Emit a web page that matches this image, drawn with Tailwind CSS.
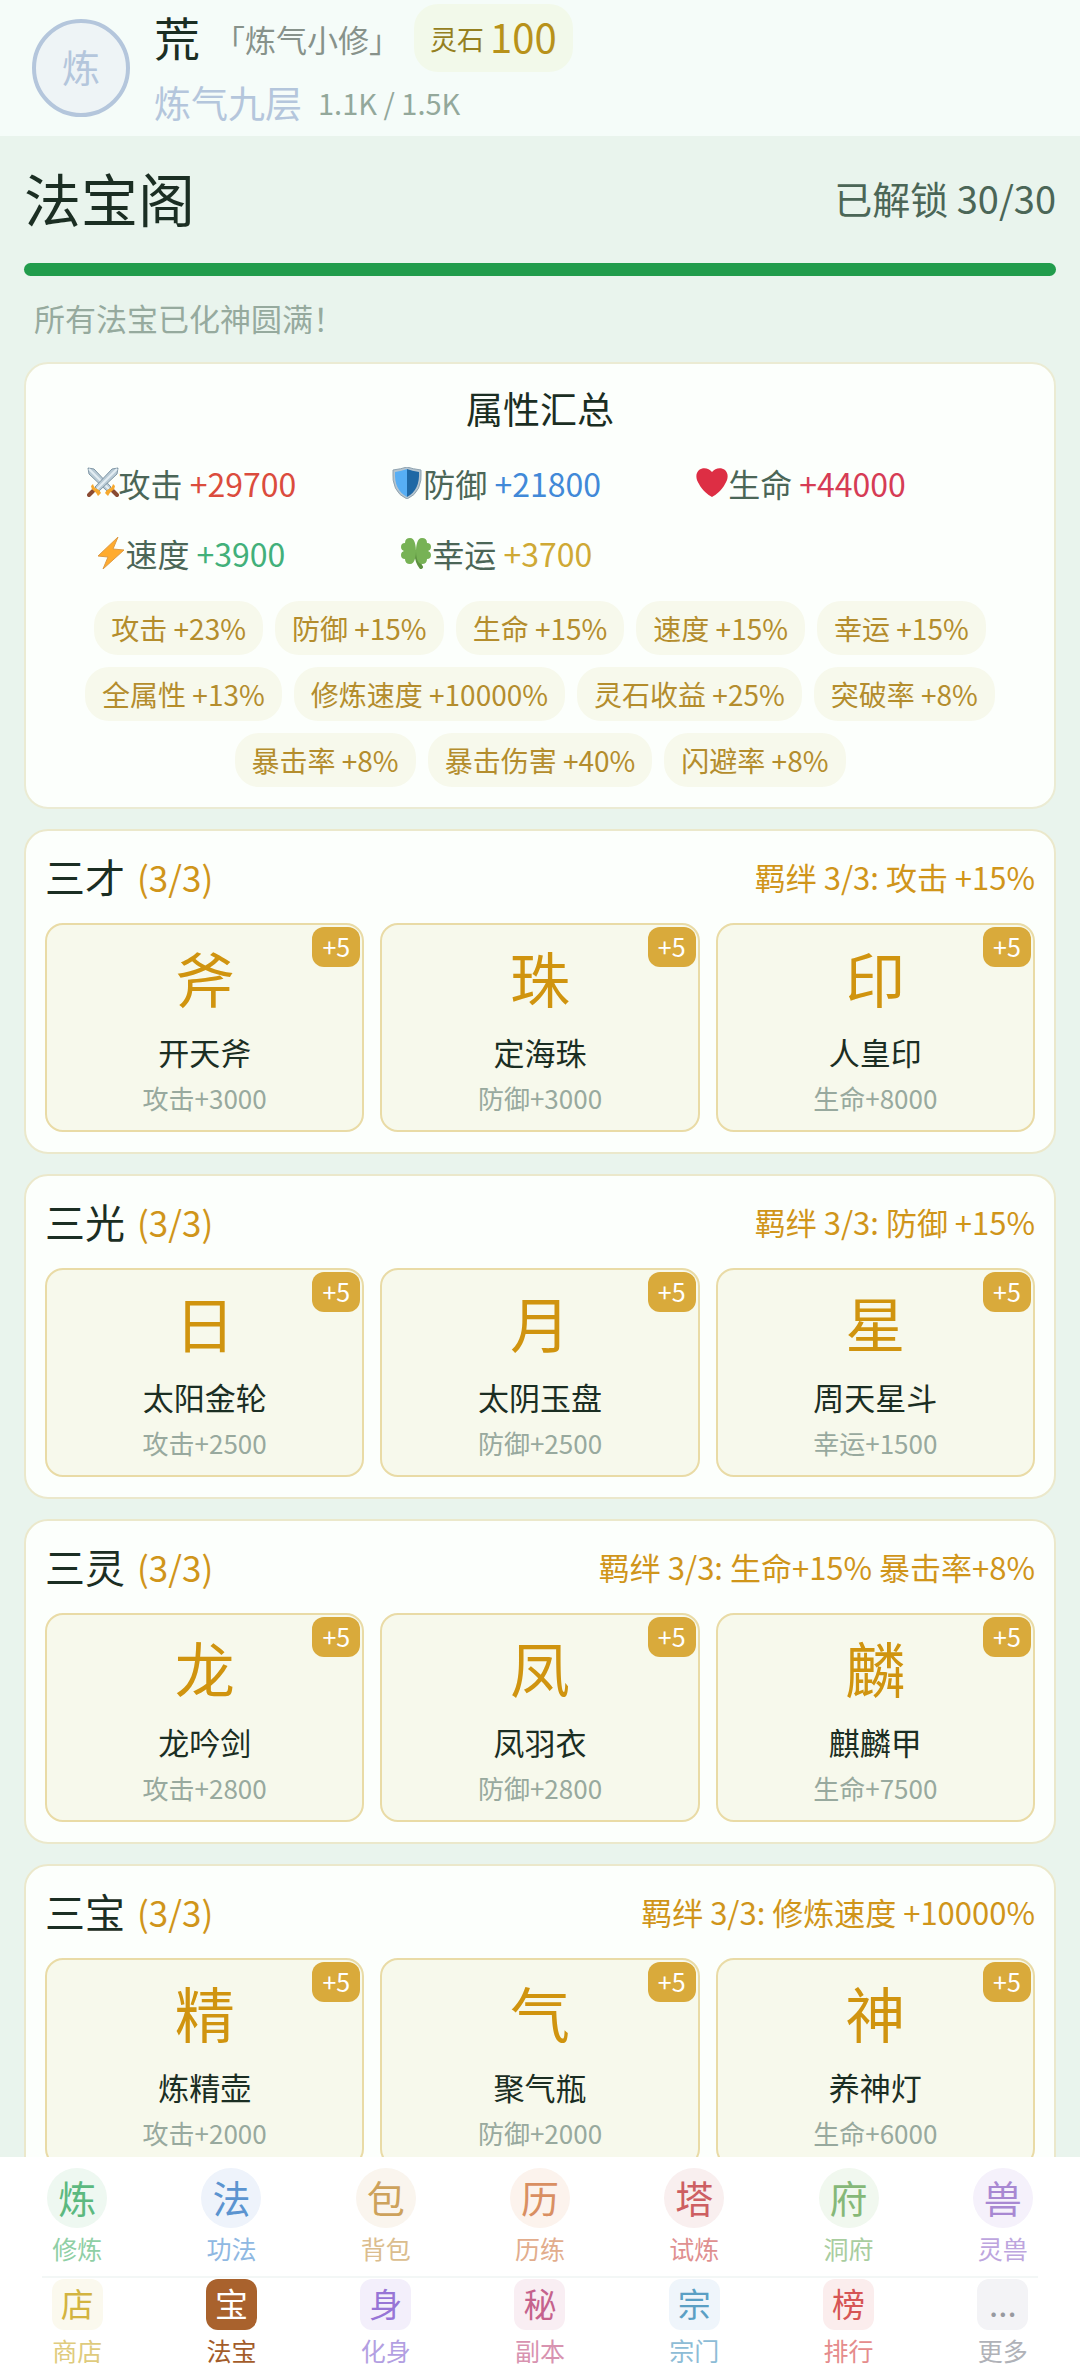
<!DOCTYPE html>
<html lang="zh-CN">
<head>
    <meta charset="UTF-8" />
    <meta name="viewport" content="width=device-width, initial-scale=1.0" />
    <title>法宝阁</title>
    <script src="https://cdn.jsdelivr.net/npm/@tailwindcss/browser@4"></script>
</head>
<body class="font-['Noto_Sans_CJK_SC',sans-serif] text-[#1b2e23]">
<div class="flex flex-col h-screen bg-[#e9f4ed]">
    <header class="flex items-center gap-6 px-8 h-[136px] shrink-0 bg-[#f5fcf9]">
        <div class="flex items-center justify-center size-[98px] pb-1 rounded-full border-4 border-[#b4c6dc] bg-[#eef4f6] text-[#b4c6dc] text-[38px] leading-none">炼</div>
        <div class="flex flex-col">
            <div class="flex items-center gap-3.5 h-[68px]">
                <span class="text-[46px] leading-none pb-1">荒</span>
                <span class="text-[31px] leading-none text-[#87928b]">「炼气小修」</span>
                <div class="flex items-center gap-1.5 h-full px-4 rounded-3xl bg-[#f2f9ea]">
                    <span class="text-[27px] leading-none text-[#95801f]">灵石</span>
                    <span class="text-[40px] leading-none text-[#b8921a] pb-1" id="stones">100</span>
                </div>
            </div>
            <div class="flex items-center gap-4 h-[60px]">
                <span class="text-[37px] leading-none text-[#b4c6dc]">炼气九层</span>
                <span class="text-[29px] leading-none text-[#93a89b]">1.1K / 1.5K</span>
            </div>
        </div>
    </header>

    <main class="flex-1 min-h-0 overflow-y-auto [scrollbar-width:none] px-6">
        <div class="flex items-center justify-between h-[127px] pb-1">
            <h1 class="text-[57px] leading-none">法宝阁</h1>
            <span class="text-[38px] leading-none text-[#4b6657]">已解锁 30/30</span>
        </div>
        <div class="h-[13px] rounded-full bg-[#d3e8da]" role="progressbar" aria-label="已解锁" aria-valuenow="30" aria-valuemax="30">
            <div class="h-full rounded-full bg-[#219c4c]" style="width: 100%"></div>
        </div>
        <p class="px-2.5 h-[86px] leading-[84px] text-[31px] text-[#96aa9e]">所有法宝已化神圆满！</p>

        <section class="rounded-3xl border-2 border-[#ebebd3] bg-[#fcfffc] px-4 pt-4 pb-5">
            <h2 class="text-center text-[37px] leading-[56px]">属性汇总</h2>
            <div class="grid grid-cols-[30%_30%_30%] gap-x-1.5 gap-y-4 mt-5 text-[32px] leading-[54px]">
                <div class="flex items-center justify-center">
                    <svg class="size-8" viewBox="0 0 32 32">
                        <g id="sword">
                            <path d="M1 1l6 1 17 18-4 4L2 7z" fill="#b9cbd6" stroke="#7f96a5" stroke-width="1" />
                            <path d="M2 2l20 20" stroke="#e4eef3" stroke-width="2" />
                            <path d="M26 24l4 4" stroke="#8a4b32" stroke-width="4" stroke-linecap="round" />
                            <path d="M18 26q1-3 4-4 3-1 4-5l2 2q0 3-3 5-3 2-4 5z" fill="#f6a82d" />
                        </g>
                        <use href="#sword" transform="matrix(-1 0 0 1 32 0)" />
                    </svg>
                    <span class="text-[#4b6657]">攻击&nbsp;</span><span class="text-[#db4c3d]">+29700</span>
                </div>
                <div class="flex items-center justify-center">
                    <svg class="size-8" viewBox="0 0 32 32">
                        <path d="M16 0q6 2 14 3 2 22-14 29Q0 25 2 3q8-1 14-3z" fill="#b5c5d0" stroke="#8fa3b0" stroke-width="1" />
                        <path d="M16 2q-5 2-12 3-1 18 12 25z" fill="#57aef4" />
                        <path d="M16 2q5 2 12 3 1 18-12 25z" fill="#1f68a5" />
                    </svg>
                    <span class="text-[#4b6657]">防御&nbsp;</span><span class="text-[#4189d8]">+21800</span>
                </div>
                <div class="flex items-center justify-center">
                    <svg class="size-8" viewBox="0 0 32 32">
                        <path d="M16 5C19 1 25 0 29 3c4 4 3 9 0 14-3 6-9 11-13 13C12 28 6 23 3 17 0 12-1 7 3 3 7 0 13 1 16 5z" fill="#dd2e44" />
                    </svg>
                    <span class="text-[#4b6657]">生命&nbsp;</span><span class="text-[#d63c55]">+44000</span>
                </div>
                <div class="flex items-center justify-center">
                    <svg class="w-7 h-8" viewBox="0 0 28 32">
                        <path d="M21 0L1 19l10 1-5 12 21-19-11-1z" fill="#ffab2e" stroke="#dc9a45" stroke-width="1" stroke-linejoin="round" />
                    </svg>
                    <span class="text-[#4b6657]">速度&nbsp;</span><span class="text-[#42b07a]">+3900</span>
                </div>
                <div class="flex items-center justify-center">
                    <svg class="size-8" viewBox="0 0 32 32">
                        <path d="M16 15q1 10 5 15" fill="none" stroke="#5d9140" stroke-width="4" stroke-linecap="round" />
                        <g fill="#77b255">
                            <path id="leaf" d="M16 15C11 15 1 16 1 10q0-4 4-4 0-5 5-5c5 0 6 8 6 14z" />
                            <use href="#leaf" transform="matrix(-1 0 0 1 32 0)" />
                            <use href="#leaf" transform="matrix(1 0 0 -1 0 28)" />
                            <use href="#leaf" transform="matrix(-1 0 0 -1 32 28)" />
                        </g>
                    </svg>
                    <span class="text-[#4b6657]">幸运&nbsp;</span><span class="text-[#cfa935]">+3700</span>
                </div>
            </div>
            <ul class="flex flex-wrap justify-center gap-3 mt-[21px] px-4" id="tags"></ul>
        </section>

        <div id="groups"></div>
    </main>

    <nav class="shrink-0 h-[219px] bg-white pt-[11px]">
        <div class="grid grid-cols-7 h-[108px]" id="nav1"></div>
        <div class="mx-[42px] border-t-2 border-[#f3f7f6]"></div>
        <div class="grid grid-cols-7 pt-px" id="nav2"></div>
    </nav>
</div>

<script>
    const tags = [
        "攻击 +23%", "防御 +15%", "生命 +15%", "速度 +15%", "幸运 +15%",
        "全属性 +13%", "修炼速度 +10000%", "灵石收益 +25%", "突破率 +8%",
        "暴击率 +8%", "暴击伤害 +40%", "闪避率 +8%",
    ];

    const groups = [
        { name: "三才", bond: "攻击 +15%", items: [["斧", "开天斧", "攻击+3000"], ["珠", "定海珠", "防御+3000"], ["印", "人皇印", "生命+8000"]] },
        { name: "三光", bond: "防御 +15%", items: [["日", "太阳金轮", "攻击+2500"], ["月", "太阴玉盘", "防御+2500"], ["星", "周天星斗", "幸运+1500"]] },
        { name: "三灵", bond: "生命+15% 暴击率+8%", items: [["龙", "龙吟剑", "攻击+2800"], ["凤", "凤羽衣", "防御+2800"], ["麟", "麒麟甲", "生命+7500"]] },
        { name: "三宝", bond: "修炼速度 +10000%", items: [["精", "炼精壶", "攻击+2000"], ["气", "聚气瓶", "防御+2000"], ["神", "养神灯", "生命+6000"]] },
    ];

    // icon, label, icon classes, label class
    const nav1 = [
        ["炼", "修炼", "bg-[#eef8f1] text-[#5cb97f]", "text-[#8fcfa5]"],
        ["法", "功法", "bg-[#eef3fb] text-[#5b94d0]", "text-[#8fb8e2]"],
        ["包", "背包", "bg-[#faf5ee] text-[#cda25c]", "text-[#dbbd8e]"],
        ["历", "历练", "bg-[#fcf3ed] text-[#d98f62]", "text-[#e2ad8d]"],
        ["塔", "试炼", "bg-[#f9efef] text-[#cd5f62]", "text-[#df9090]"],
        ["府", "洞府", "bg-[#f1f8ef] text-[#86b878]", "text-[#a9cd9f]"],
        ["兽", "灵兽", "bg-[#f5f1fb] text-[#a888d2]", "text-[#bda5de]"],
    ];
    const nav2 = [
        ["店", "商店", "bg-[#fbf9ee] text-[#d3b440]", "text-[#dfcb7d]"],
        ["宝", "法宝", "bg-[#a9622d] text-white", "text-[#a35c2a]"],
        ["身", "化身", "bg-[#f3effb] text-[#9775d6]", "text-[#b39fe2]"],
        ["秘", "副本", "bg-[#f9eef3] text-[#c5628c]", "text-[#d893b0]"],
        ["宗", "宗门", "bg-[#eff5fb] text-[#5b9fc4]", "text-[#8dbcd6]"],
        ["榜", "排行", "bg-[#fbeded] text-[#d65555]", "text-[#e58c8c]"],
        ["...", "更多", "bg-[#f3f3f6] text-[#97999f]", "text-[#b0b2b8]"],
    ];

    document.getElementById("tags").innerHTML = tags.map((t) =>
        `<li class="px-[17px] h-[54px] leading-[54px] rounded-3xl bg-[#f7f9ec] text-[#b48d2d] text-[28px]">${t}</li>`
    ).join("");

    document.getElementById("groups").innerHTML = groups.map((g) => `
        <section class="mt-5 rounded-3xl border-2 border-[#ebe8cb] bg-[#fcfffc] px-[19px] pb-5">
            <div class="flex items-center justify-between h-[92px] pb-0.5">
                <h3 class="flex items-center gap-3 text-[40px] leading-none">${g.name}<span class="text-[35px] text-[#d0951a]">(3/3)</span></h3>
                <span class="text-[31px] leading-none text-[#d0951a]">羁绊 3/3: ${g.bond}</span>
            </div>
            <div class="grid grid-cols-3 gap-4">
                ${g.items.map(([icon, name, stat]) => `
                <button class="relative flex flex-col items-center h-[209px] pt-5 rounded-[18px] border-2 border-[#e9dba6] bg-[#f7f9ec]">
                    <span class="absolute top-0.5 right-0.5 w-12 h-10 leading-[38px] rounded-xl bg-[#d9aa3b] text-white text-[25px]">+5</span>
                    <span class="text-[60px] leading-[64px] text-[#d0940f]">${icon}</span>
                    <span class="mt-5 text-[31px] leading-[46px]">${name}</span>
                    <span class="text-[26px] leading-[46px] text-[#98a99e]">${stat}</span>
                </button>`).join("")}
            </div>
        </section>`).join("");

    document.getElementById("nav1").innerHTML = nav1.map(([icon, label, box, text]) => `
        <button class="flex flex-col items-center">
            <span class="size-[60px] rounded-full text-[38px] leading-[58px] ${box}">${icon}</span>
            <span class="text-[25px] leading-[40px] ${text}">${label}</span>
        </button>`).join("");

    document.getElementById("nav2").innerHTML = nav2.map(([icon, label, box, text]) => `
        <button class="flex flex-col items-center">
            <span class="size-[51px] rounded-xl text-[33px] leading-[48px] ${box}">${icon}</span>
            <span class="text-[25px] leading-[40px] ${text}">${label}</span>
        </button>`).join("");
</script>
</body>
</html>
